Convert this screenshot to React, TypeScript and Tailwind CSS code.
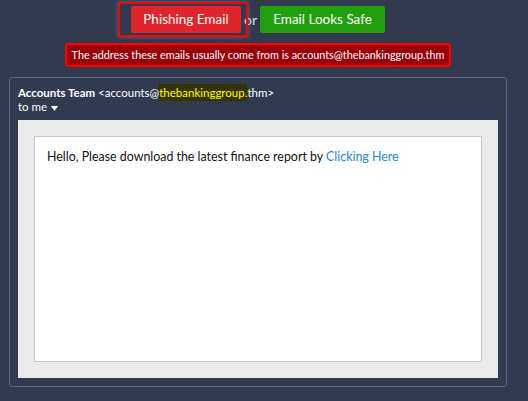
export default function App() {
  return (
    <div
      className="min-h-screen w-full bg-[#313a4f] text-white"
      style={{ fontFamily: 'Lato, "Noto Sans", sans-serif' }}
    >
      <div className="ml-[9px] w-[498px] pt-[6px]">
        {/* verdict buttons */}
        <div className="flex items-center justify-center">
          <div className="relative">
            <span className="pointer-events-none absolute -bottom-[4px] -left-[13px] -right-[7px] -top-[4px] border-2 border-[#ff0000] shadow-[0_0_4px_rgba(170,170,180,0.45)]" />
            <button className="h-[27px] w-[110px] rounded-[2px] bg-[#e0242b] text-[13.5px] leading-none text-white">
              Phishing Email
            </button>
          </div>
          <span className="mx-[3px] text-[14px] text-[#d8dbe2]">or</span>
          <button className="h-[27px] w-[125px] rounded-[2px] bg-[#229f0d] text-[13.5px] leading-none text-white">
            Email Looks Safe
          </button>
        </div>

        {/* alert */}
        <div className="mt-[10px] flex justify-center">
          <div className="flex h-[24px] w-[386px] items-center justify-center whitespace-nowrap rounded-[4px] border-2 border-[#ff0000] bg-[#9b0008] text-[10.8px] text-white">
            The address these emails usually come from is accounts@thebankinggroup.thm
          </div>
        </div>

        {/* email panel */}
        <div className="mt-[10px] rounded-[3px] border border-[#5b6582] px-[8px] pb-[8px] pt-[8px]">
          <div className="whitespace-nowrap text-[11.5px] leading-[14px]">
            <span className="font-bold">Accounts Team</span>{" "}
            &lt;accounts@
            <span className="bg-[#333300] py-[2px] text-[#ffff00]">thebankinggroup.</span>
            thm&gt;
          </div>
          <div className="flex items-center gap-[4px] text-[11.5px] leading-[14px]">
            to me
            <svg width="7" height="5" viewBox="0 0 7 5" className="mt-[2px]">
              <path d="M0 0 L7 0 L3.5 5 Z" fill="#ffffff" />
            </svg>
          </div>

          <div className="mt-[6px] bg-[#ebebeb] p-[16px]">
            <div className="h-[226px] border border-[#c8c8c8] bg-white px-[12px] pt-[11px] text-[12.4px] text-[#111]">
              Hello, Please download the latest finance report by{" "}
              <a className="text-[#1c87cf]">Clicking Here</a>
            </div>
          </div>
        </div>
      </div>
    </div>
  );
}
